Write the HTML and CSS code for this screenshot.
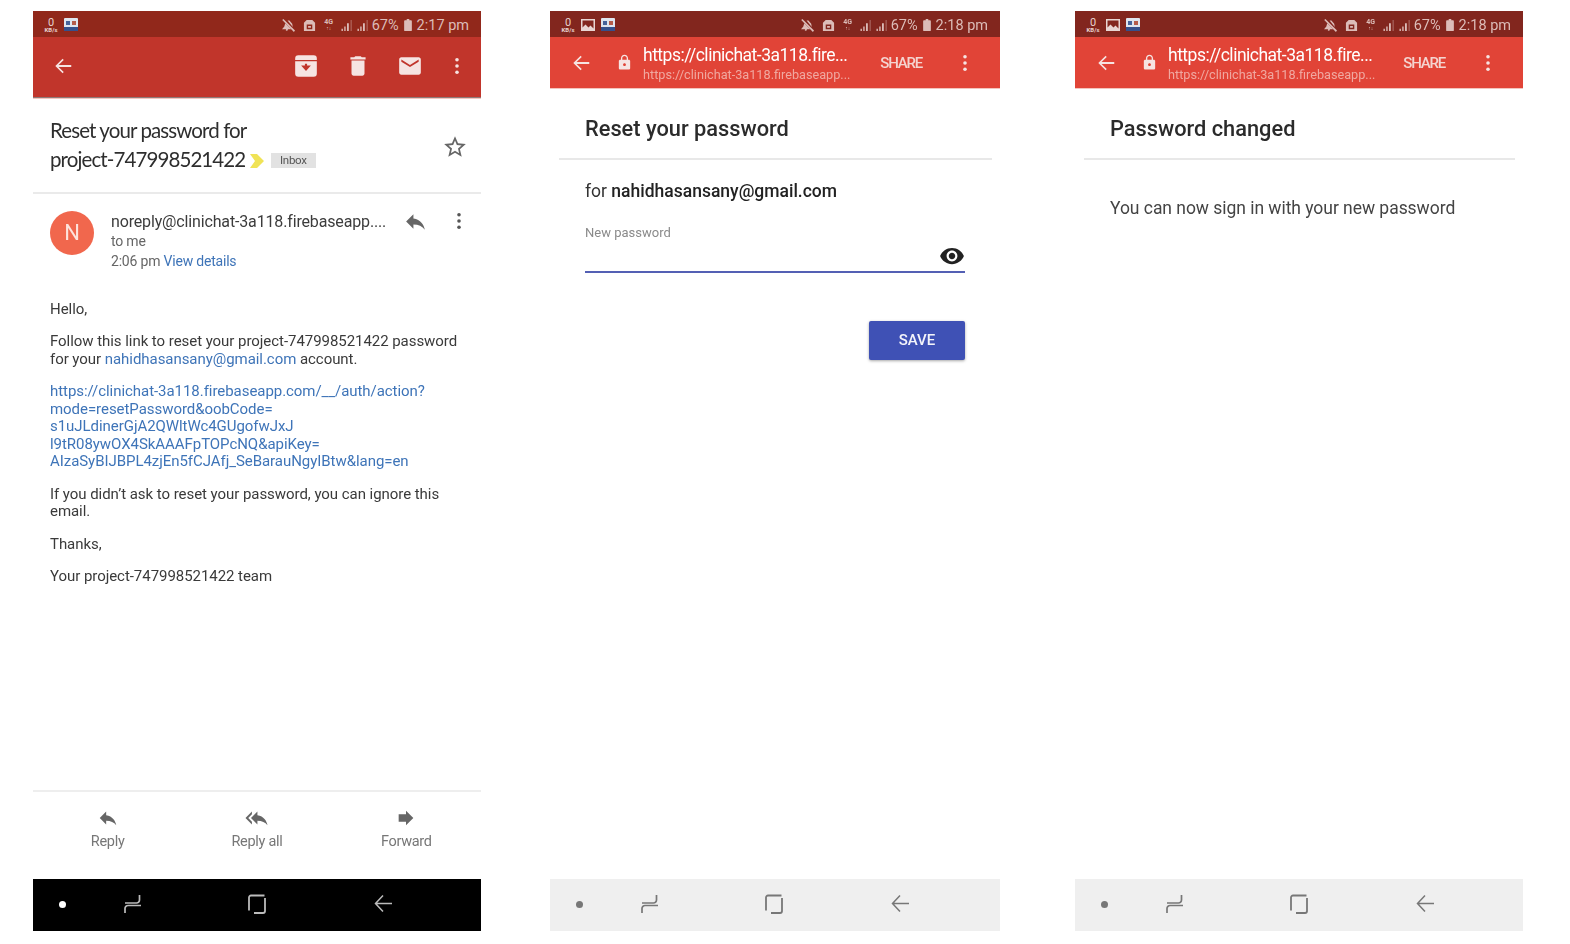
FILE: index.html
```html
<!DOCTYPE html>
<html lang="en">
<head>
    <meta charset="UTF-8">
    <meta name="viewport" content="width=device-width, initial-scale=1.0">
    <title>Password reset flow</title>
    <link rel="stylesheet" href="styles.css">
</head>
<body>
    <svg class="sprite" xmlns="http://www.w3.org/2000/svg">
        <symbol id="i-back" viewBox="0 0 24 24"><path d="M21 11H7.2l5.6-5.6L11.6 4 3.6 12l8 8 1.2-1.4L7.2 13H21z"/></symbol>
        <symbol id="i-more" viewBox="0 0 6 20"><circle cx="3" cy="3" r="2"/><circle cx="3" cy="10" r="2"/><circle cx="3" cy="17" r="2"/></symbol>
        <symbol id="i-reply" viewBox="0 0 24 24"><path d="M10 9V5l-7 7 7 7v-4.1c5 0 8.5 1.6 11 5.1-1-5-4-10-11-11z"/></symbol>
        <symbol id="i-replyall" viewBox="0 0 24 24"><path d="M7 8V5l-7 7 7 7v-3l-4-4 4-4zm6 1V5l-7 7 7 7v-4.1c5 0 8.5 1.6 11 5.1-1-5-4-10-11-11z"/></symbol>
        <symbol id="i-forward" viewBox="0 0 24 24"><path d="M12 8V4l8 8-8 8v-4H4V8z"/></symbol>
        <symbol id="i-lock" viewBox="0 0 24 24"><path d="M18 8h-1V6c0-2.76-2.24-5-5-5S7 3.24 7 6v2H6c-1.1 0-2 .9-2 2v10c0 1.1.9 2 2 2h12c1.1 0 2-.9 2-2V10c0-1.1-.9-2-2-2zm-6 9c-1.1 0-2-.9-2-2s.9-2 2-2 2 .9 2 2-.9 2-2 2zm3.1-9H8.9V6c0-1.71 1.39-3.1 3.1-3.1 1.71 0 3.1 1.39 3.1 3.1v2z"/></symbol>
        <symbol id="i-eye" viewBox="0 0 24 24"><path d="M12 4.5C7 4.5 2.73 7.61 1 12c1.73 4.39 6 7.5 11 7.5s9.27-3.11 11-7.5c-1.73-4.39-6-7.5-11-7.5zM12 17c-2.76 0-5-2.24-5-5s2.24-5 5-5 5 2.24 5 5-2.24 5-5 5zm0-8c-1.66 0-3 1.34-3 3s1.34 3 3 3 3-1.34 3-3-1.34-3-3-3z"/></symbol>
        <symbol id="i-delete" viewBox="0 0 24 24"><path d="M6 19c0 1.1.9 2 2 2h8c1.1 0 2-.9 2-2V7H6v12zM19 4h-3.5l-1-1h-5l-1 1H5v2h14V4z"/></symbol>
        <symbol id="i-mail" viewBox="0 0 24 24"><path d="M20 4H4c-1.1 0-2 .9-2 2v12c0 1.1.9 2 2 2h16c1.1 0 2-.9 2-2V6c0-1.1-.9-2-2-2zm0 4l-8 5-8-5V6l8 5 8-5v2z"/></symbol>
        <symbol id="i-archive" viewBox="0 0 24 24"><path fill-rule="evenodd" d="M5 2h14a3 3 0 0 1 3 3v14a3 3 0 0 1-3 3H5a3 3 0 0 1-3-3V5a3 3 0 0 1 3-3zM2 6.500v1h20v-1zM7.500 11.500H11V10h2v1.500h3.500L12 16.500z"/></symbol>
        <symbol id="i-star" viewBox="0 0 24 24"><path d="M22 9.24l-7.19-.62L12 2 9.19 8.63 2 9.24l5.46 4.73L5.82 21 12 17.27 18.18 21l-1.63-7.03L22 9.24zM12 15.4l-3.76 2.27 1-4.28-3.32-2.88 4.38-.38L12 6.1l1.71 4.04 4.38.38-3.32 2.88 1 4.28L12 15.4z"/></symbol>
        <symbol id="i-mute" viewBox="0 0 14 14"><path d="M1.500 0L14 12.500 12.800 14 .3 1.200z"/><path d="M6 1.500h2L11 5l.6 3.500zM3.500 4.500L10 11H6.500l-1 2-1.500-1 .5-1H0l2.500-3z"/></symbol>
        <symbol id="i-sd" viewBox="0 0 14 14"><path fill-rule="evenodd" d="M4 1h6l3 3v9H1V4zM4 6v5h6V6zm1.500 1.500h3v2h-3z"/></symbol>
        <symbol id="i-signal" viewBox="0 0 14 12"><path d="M1 9.500h1.500V12H1zM4 7h1.500v5H4zM7 3.500h2V12H7z"/><path d="M11 0h1v12h-1z" opacity=".55"/></symbol>
        <symbol id="i-battery" viewBox="0 0 9 14"><path d="M3 0h3v1.500h2a1 1 0 0 1 1 1V13a1 1 0 0 1-1 1H1a1 1 0 0 1-1-1V2.500a1 1 0 0 1 1-1h2z"/></symbol>
        <symbol id="i-recent" viewBox="0 0 18 20"><path d="M1 9h11.500a3 3 0 0 0 3-3V1M17 11.500H4a3 3 0 0 0-3 3V19" fill="none" stroke="currentColor" stroke-width="1.700"/></symbol>
        <symbol id="i-home" viewBox="0 0 18 20"><path d="M16.500 1.500H3a2 2 0 0 0-2 2v13M17 4v13a2 2 0 0 1-2 2H6" fill="none" stroke="currentColor" stroke-width="1.800"/></symbol>
        <symbol id="i-navback" viewBox="0 0 18 20"><path d="M18 9.500H1.500M9 1.500L1.500 9.500l7.500 8" fill="none" stroke="currentColor" stroke-width="1.500"/></symbol>
    </svg>

    <div class="screens">
        <!-- gmail message -->
        <section class="phone phone-mail">
            <div class="status status-mail">
                <div class="kbs">0<small>KB/s</small></div>
                <svg class="st-book" viewBox="0 0 14 14"><rect width="14" height="13" rx="1" fill="#dfe5ef"/><rect x="2" y="3" width="4" height="4" fill="#46629a"/><rect x="8" y="3" width="4" height="4" fill="#b55c4a"/><rect y="9" width="14" height="4" fill="#35508c"/></svg>
                <div class="status-right">
                    <svg class="st-ic"><use href="#i-mute"/></svg>
                    <svg class="st-ic"><use href="#i-sd"/></svg>
                    <div class="net">4G<small>↑↓</small></div>
                    <svg class="st-sig"><use href="#i-signal"/></svg>
                    <svg class="st-sig"><use href="#i-signal"/></svg>
                    <span>67%</span>
                    <svg class="st-bat"><use href="#i-battery"/></svg>
                    <span>2:17 pm</span>
                </div>
            </div>
            <div class="toolbar toolbar-mail">
                <svg class="tb-back"><use href="#i-back"/></svg>
                <div class="tb-actions">
                    <svg class="tb-ic"><use href="#i-archive"/></svg>
                    <svg class="tb-ic"><use href="#i-delete"/></svg>
                    <svg class="tb-ic tb-mail"><use href="#i-mail"/></svg>
                    <svg class="tb-more"><use href="#i-more"/></svg>
                </div>
            </div>
            <div class="subject">
                <h1>Reset your password for<br>project-747998521422 <svg class="marker" viewBox="0 0 14 16"><path d="M0 1h7l7 7-7 7H0l5-7z" fill="#f0e356"/></svg> <span class="tag">Inbox</span></h1>
                <svg class="star"><use href="#i-star"/></svg>
            </div>
            <div class="sender">
                <div class="avatar">N</div>
                <div class="sender-info">
                    <div class="sender-name">noreply@clinichat-3a118.firebaseapp....</div>
                    <div class="sender-sub">to me</div>
                    <div class="sender-sub">2:06 pm <a class="link">View details</a></div>
                </div>
                <svg class="sender-reply"><use href="#i-reply"/></svg>
                <svg class="sender-more"><use href="#i-more"/></svg>
            </div>
            <div class="message">
                <p>Hello,</p>
                <p>Follow this link to reset your project-747998521422 password<br>for your <a class="link">nahidhasansany@gmail.com</a> account.</p>
                <p><a class="link">https://clinichat-3a118.firebaseapp.com/__/auth/action?<br>mode=resetPassword&amp;oobCode=<br>s1uJLdinerGjA2QWltWc4GUgofwJxJ<br>l9tR08ywOX4SkAAAFpTOPcNQ&amp;apiKey=<br>AIzaSyBIJBPL4zjEn5fCJAfj_SeBarauNgyIBtw&amp;lang=en</a></p>
                <p>If you didn’t ask to reset your password, you can ignore this<br>email.</p>
                <p>Thanks,</p>
                <p>Your project-747998521422 team</p>
            </div>
            <div class="actions">
                <div class="action"><svg><use href="#i-reply"/></svg>Reply</div>
                <div class="action"><svg><use href="#i-replyall"/></svg>Reply all</div>
                <div class="action"><svg><use href="#i-forward"/></svg>Forward</div>
            </div>
            <div class="navbar navbar-dark">
                <span class="nav-dot"></span>
                <svg class="nav-ic"><use href="#i-recent"/></svg>
                <svg class="nav-ic"><use href="#i-home"/></svg>
                <svg class="nav-ic"><use href="#i-navback"/></svg>
            </div>
        </section>

        <!-- reset form -->
        <section class="phone phone-wide">
            <div class="status">
                <div class="kbs">0<small>KB/s</small></div>
                <svg class="st-pic" viewBox="0 0 14 12"><path fill-rule="evenodd" d="M0 0h14v12H0zm1.500 1.500v7l3-3 3 3 2-2 3 3v-8z" fill="#e8d5d2"/></svg>
                <svg class="st-book" viewBox="0 0 14 14"><rect width="14" height="13" rx="1" fill="#dfe5ef"/><rect x="2" y="3" width="4" height="4" fill="#46629a"/><rect x="8" y="3" width="4" height="4" fill="#b55c4a"/><rect y="9" width="14" height="4" fill="#35508c"/></svg>
                <div class="status-right">
                    <svg class="st-ic"><use href="#i-mute"/></svg>
                    <svg class="st-ic"><use href="#i-sd"/></svg>
                    <div class="net">4G<small>↑↓</small></div>
                    <svg class="st-sig"><use href="#i-signal"/></svg>
                    <svg class="st-sig"><use href="#i-signal"/></svg>
                    <span>67%</span>
                    <svg class="st-bat"><use href="#i-battery"/></svg>
                    <span>2:18 pm</span>
                </div>
            </div>
            <div class="toolbar toolbar-tab">
                <svg class="tb-back"><use href="#i-back"/></svg>
                <svg class="tb-lock"><use href="#i-lock"/></svg>
                <div class="tab-url">
                    <div class="url-main">https://clinichat-3a118.fire...</div>
                    <div class="url-sub">https://clinichat-3a118.firebaseapp...</div>
                </div>
                <div class="share">SHARE</div>
                <svg class="tb-more"><use href="#i-more"/></svg>
            </div>
            <div class="page">
                <h2>Reset your password</h2>
                <div class="page-body">
                    <div class="for-line">for <b>nahidhasansany@gmail.com</b></div>
                    <div class="field">
                        <div class="field-label">New password</div>
                        <svg class="eye"><use href="#i-eye"/></svg>
                    </div>
                    <div class="form-end"><button class="save" type="button">SAVE</button></div>
                </div>
            </div>
            <div class="navbar navbar-light">
                <span class="nav-dot"></span>
                <svg class="nav-ic"><use href="#i-recent"/></svg>
                <svg class="nav-ic"><use href="#i-home"/></svg>
                <svg class="nav-ic"><use href="#i-navback"/></svg>
            </div>
        </section>

        <!-- done -->
        <section class="phone">
            <div class="status">
                <div class="kbs">0<small>KB/s</small></div>
                <svg class="st-pic" viewBox="0 0 14 12"><path fill-rule="evenodd" d="M0 0h14v12H0zm1.500 1.500v7l3-3 3 3 2-2 3 3v-8z" fill="#e8d5d2"/></svg>
                <svg class="st-book" viewBox="0 0 14 14"><rect width="14" height="13" rx="1" fill="#dfe5ef"/><rect x="2" y="3" width="4" height="4" fill="#46629a"/><rect x="8" y="3" width="4" height="4" fill="#b55c4a"/><rect y="9" width="14" height="4" fill="#35508c"/></svg>
                <div class="status-right">
                    <svg class="st-ic"><use href="#i-mute"/></svg>
                    <svg class="st-ic"><use href="#i-sd"/></svg>
                    <div class="net">4G<small>↑↓</small></div>
                    <svg class="st-sig"><use href="#i-signal"/></svg>
                    <svg class="st-sig"><use href="#i-signal"/></svg>
                    <span>67%</span>
                    <svg class="st-bat"><use href="#i-battery"/></svg>
                    <span>2:18 pm</span>
                </div>
            </div>
            <div class="toolbar toolbar-tab">
                <svg class="tb-back"><use href="#i-back"/></svg>
                <svg class="tb-lock"><use href="#i-lock"/></svg>
                <div class="tab-url">
                    <div class="url-main">https://clinichat-3a118.fire...</div>
                    <div class="url-sub">https://clinichat-3a118.firebaseapp...</div>
                </div>
                <div class="share">SHARE</div>
                <svg class="tb-more"><use href="#i-more"/></svg>
            </div>
            <div class="page">
                <h2>Password changed</h2>
                <p class="done-text">You can now sign in with your new password</p>
            </div>
            <div class="navbar navbar-light">
                <span class="nav-dot"></span>
                <svg class="nav-ic"><use href="#i-recent"/></svg>
                <svg class="nav-ic"><use href="#i-home"/></svg>
                <svg class="nav-ic"><use href="#i-navback"/></svg>
            </div>
        </section>
    </div>
</body>
</html>
```

FILE: styles.css
```css
* {
    box-sizing: border-box;
}
body {
    margin: 0;
    background: #fff;
    font-family: Roboto, "Liberation Sans", sans-serif;
    color: #333;
}
.sprite {
    display: none;
}
svg {
    fill: currentColor;
    flex-shrink: 0;
}
.screens {
    display: flex;
    padding: 11px 0 0 33px;
    gap: 69px;
    filter: blur(0.35px);
}
.phone {
    width: 448px;
    height: 920px;
    display: flex;
    flex-direction: column;
    overflow: hidden;
}
.phone-wide {
    width: 450px;
    margin-right: 6px;
}

/* status bar */
.status {
    height: 26px;
    background: #82261e;
    color: #dcbcb8;
    display: flex;
    align-items: center;
    padding: 2px 12px 0 10px;
    font-size: 14.5px;
    flex-shrink: 0;
}
.status-mail {
    background: #91281b;
}
.kbs {
    width: 16px;
    font-size: 11px;
    line-height: 9px;
    text-align: center;
    margin-right: 5px;
    color: #e6d3d0;
}
.kbs small {
    display: block;
    font-size: 6px;
    line-height: 6px;
    font-weight: 700;
}
.st-book {
    width: 14px;
    height: 14px;
}
.st-pic {
    width: 14px;
    height: 12px;
    margin-right: 6px;
}
.status-right {
    margin-left: auto;
    display: flex;
    align-items: center;
}
.st-ic {
    width: 13px;
    height: 13px;
    margin-right: 8px;
}
.net {
    width: 10px;
    font-size: 7px;
    line-height: 6px;
    font-weight: 700;
    text-align: center;
    margin-right: 6px;
}
.net small {
    display: block;
    font-size: 5px;
}
.st-sig {
    width: 14px;
    height: 11px;
    margin-right: 2px;
}
.st-bat {
    width: 8px;
    height: 12px;
    margin: 0 5px;
}

/* toolbars */
.toolbar {
    color: #f6e4e2;
    display: flex;
    align-items: center;
    border-bottom: 1px solid #f4c4bd;
    flex-shrink: 0;
}
.toolbar-mail {
    height: 62px;
    background: #c1352b;
    padding: 0 21px 3px 19px;
    box-shadow: inset 0 -1px 0 #8e7a78;
}
.toolbar-tab {
    height: 52px;
    background: #e14437;
    padding: 0 32px 0 20px;
}
.tb-back {
    width: 22px;
    height: 22px;
}
.tb-actions {
    margin-left: auto;
    display: flex;
    align-items: center;
}
.tb-ic {
    width: 26px;
    height: 26px;
    margin-right: 26px;
}
.tb-mail {
    margin-right: 31px;
}
.tb-more {
    width: 6px;
    height: 18px;
}
.tb-lock {
    width: 17px;
    height: 17px;
    margin-left: 24px;
}
.tab-url {
    margin-left: 10px;
    padding-top: 2px;
}
.url-main {
    font-size: 17.5px;
    line-height: 22px;
    color: #fff;
    letter-spacing: -0.5px;
    white-space: nowrap;
}
.url-sub {
    font-size: 12.7px;
    line-height: 17px;
    color: #f0a8a0;
    white-space: nowrap;
}
.share {
    margin-left: auto;
    font-size: 15px;
    letter-spacing: -1.2px;
    color: #f4d4d0;
    font-weight: 500;
    margin-right: 40px;
}

/* mail */
.subject {
    height: 95px;
    flex-shrink: 0;
    border-bottom: 2px solid #eaeaea;
    padding: 17px 13px 0 17px;
    display: flex;
    justify-content: space-between;
}
.subject h1 {
    margin: 0;
    font-family: Lato, Roboto, sans-serif;
    font-size: 20.5px;
    line-height: 29px;
    font-weight: 400;
    color: #2e2e2e;
    letter-spacing: -0.9px;
}
.marker {
    width: 14px;
    height: 16px;
    vertical-align: -2px;
}
.tag {
    display: inline-block;
    vertical-align: 3px;
    background: #e2e2e2;
    color: #555;
    font-family: Roboto, sans-serif;
    font-size: 11.5px;
    line-height: 15px;
    padding: 0 9px;
    letter-spacing: -0.3px;
    margin-left: 3px;
}
.star {
    width: 26px;
    height: 26px;
    color: #666;
    margin-top: 18px;
}
.sender {
    display: flex;
    padding: 17px 17px 0;
    flex-shrink: 0;
}
.avatar {
    width: 44px;
    height: 44px;
    border-radius: 50%;
    background: #f1674d;
    color: #fde3dc;
    font-size: 22px;
    line-height: 44px;
    text-align: center;
    flex-shrink: 0;
}
.sender-info {
    margin-left: 17px;
    padding-top: 1px;
    width: 294px;
}
.sender-name {
    font-size: 16px;
    line-height: 19px;
    color: #3c3c3c;
    letter-spacing: -0.15px;
    white-space: nowrap;
}
.sender-sub {
    font-size: 14px;
    line-height: 20px;
    color: #666;
    letter-spacing: -0.2px;
}
.link {
    color: #3e74b8;
}
.sender-reply {
    width: 25px;
    height: 25px;
    color: #666;
    margin-left: -2px;
    margin-top: -2px;
}
.sender-more {
    width: 6px;
    height: 18px;
    color: #555;
    margin-left: 28px;
    margin-top: 1px;
}
.message {
    padding: 29.5px 17px 0;
    font-size: 15px;
    line-height: 17.5px;
    color: #3a3a3a;
    letter-spacing: -0.05px;
    flex: 1;
}
.message p {
    margin: 0 0 15px;
}
.actions {
    height: 89px;
    flex-shrink: 0;
    border-top: 2px solid #eeeeee;
    display: grid;
    grid-template-columns: repeat(3, 1fr);
    padding-top: 15px;
}
.action {
    display: flex;
    flex-direction: column;
    align-items: center;
    font-size: 14.5px;
    letter-spacing: -0.3px;
    color: #777;
}
.action svg {
    width: 22px;
    height: 22px;
    color: #666;
    margin-bottom: 4px;
}
.action:nth-child(2) svg {
    width: 27px;
}

/* nav */
.navbar {
    height: 52px;
    flex-shrink: 0;
    display: flex;
    align-items: center;
    padding: 0 0 2px 26px;
}
.navbar-dark {
    background: #000;
    color: #bbb;
}
.navbar-light {
    background: #efefef;
    color: #777;
}
.nav-dot {
    flex-shrink: 0;
    width: 7px;
    height: 7px;
    border-radius: 50%;
    background: currentColor;
    margin-right: 58px;
}
.navbar-dark .nav-dot {
    background: #fff;
}
.nav-ic {
    width: 18px;
    height: 20px;
    margin-right: 106px;
}
.nav-ic + .nav-ic {
    margin-right: 108px;
}
.nav-ic:last-child {
    margin-right: 0;
}

/* firebase pages */
.page {
    flex: 1;
}
.page h2 {
    margin: 0 8px 0 9px;
    height: 71px;
    border-bottom: 2px solid #e8e8e8;
    padding: 24px 0 0 26px;
    font-size: 21.8px;
    line-height: 32px;
    font-weight: 500;
    color: #2b2b2b;
}
.page-body {
    padding: 19px 35px 0 35px;
}
.for-line {
    font-size: 17.5px;
    line-height: 24px;
    color: #333;
}
.for-line b {
    font-weight: 500;
    color: #222;
}
.field {
    margin-top: 22px;
    height: 48px;
    border-bottom: 2px solid #5460b4;
    display: flex;
    justify-content: space-between;
    align-items: flex-start;
}
.field-label {
    font-size: 13px;
    line-height: 16px;
    color: #8a8a8a;
}
.eye {
    width: 26px;
    height: 26px;
    color: #222;
    margin-top: 18px;
}
.form-end {
    display: flex;
    justify-content: flex-end;
    margin-top: 48px;
}
.save {
    width: 96px;
    height: 39px;
    padding: 0 0 2px;
    background: #3f51b5;
    color: #f4f4fa;
    border: none;
    border-radius: 2px;
    font-family: Roboto, "Liberation Sans", sans-serif;
    font-size: 15px;
    font-weight: 500;
    box-shadow: 0 1px 3px rgba(0, 0, 0, 0.35);
}
.done-text {
    margin: 36px 0 0 35px;
    font-size: 17.5px;
    line-height: 24px;
    color: #444;
    letter-spacing: -0.04px;
}
```
